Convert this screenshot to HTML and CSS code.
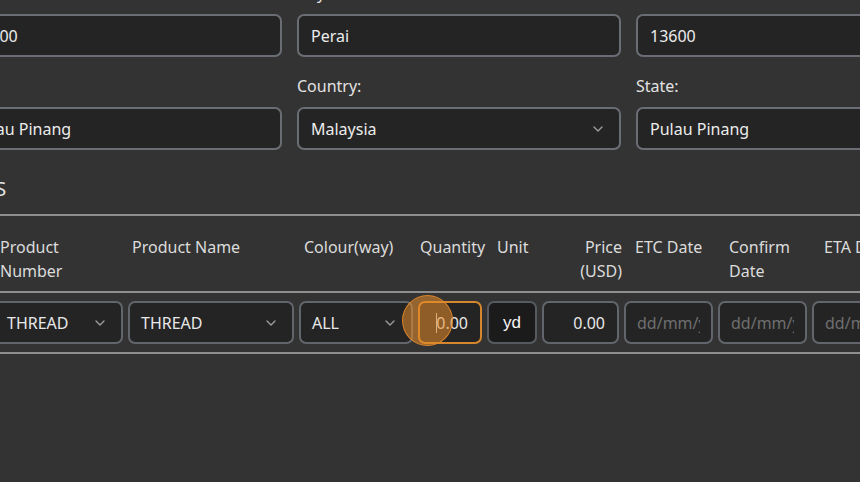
FILE: index.html
```html
<!DOCTYPE html>
<html lang="en">
<head>
<meta charset="utf-8">
<title>Order</title>
<link rel="stylesheet" href="styles.css">
</head>
<body>
<div class="page">
  <div class="form-grid">
    <div class="field"><label class="field-label">Postcode Area:</label><div class="input">13600</div></div>
    <div class="field"><label class="field-label">City:</label><div class="input">Perai</div></div>
    <div class="field"><label class="field-label">Postcode:</label><div class="input">13600</div></div>
    <div class="field"><label class="field-label">Reg:</label><div class="input">Pulau Pinang</div></div>
    <div class="field"><label class="field-label">Country:</label><div class="input select">Malaysia<svg class="chev" width="10" height="6" viewBox="0 0 10 6"><path d="M1 1 L5 5 L9 1"/></svg></div></div>
    <div class="field"><label class="field-label">State:</label><div class="input">Pulau Pinang</div></div>
  </div>

  <h2 class="section-title">ITEMS</h2>

  <div class="items">
    <div class="items-row items-head">
      <div class="th th-c1">Product Number</div>
      <div class="th th-c2">Product Name</div>
      <div class="th th-c3">Colour(way)</div>
      <div class="th th-c4">Quantity</div>
      <div class="th th-c5">Unit</div>
      <div class="th th-c6">Price (USD)</div>
      <div class="th th-c7">ETC Date</div>
      <div class="th th-c7">Confirm Date</div>
      <div class="th th-c9">ETA Date</div>
    </div>
    <div class="items-row items-body">
      <div class="cell select">THREAD<svg class="chev" width="10" height="6" viewBox="0 0 10 6"><path d="M1 1 L5 5 L9 1"/></svg></div>
      <div class="cell select">THREAD<svg class="chev" width="10" height="6" viewBox="0 0 10 6"><path d="M1 1 L5 5 L9 1"/></svg></div>
      <div class="cell select">ALL<svg class="chev" width="10" height="6" viewBox="0 0 10 6"><path d="M1 1 L5 5 L9 1"/></svg></div>
      <div class="qty-wrap">
        <div class="cell num focused"><span class="caret"></span>0.00</div>
        <span class="click-dot"></span>
      </div>
      <div class="cell unit">yd</div>
      <div class="cell num">0.00</div>
      <div class="cell date"><span class="ph">dd/mm/yyyy</span></div>
      <div class="cell date"><span class="ph">dd/mm/yyyy</span></div>
      <div class="cell date"><span class="ph">dd/mm/yyyy</span></div>
    </div>
  </div>
</div>
</body>
</html>
```
FILE: styles.css
```css
html, body {
  margin: 0;
  padding: 0;
}
body {
  background: #333333;
  color: #e4e4e4;
  font-family: "Noto Sans", "Open Sans", sans-serif;
  font-size: 16px;
  overflow: hidden;
  width: 860px;
  height: 482px;
}
.page {
  margin: -19px 0 0 -42px;
  width: 1120px;
}
.form-grid {
  display: grid;
  grid-template-columns: repeat(3, 324px);
  column-gap: 15px;
  row-gap: 17px;
}
.field-label {
  display: block;
  line-height: 24px;
  margin-bottom: 9px;
  color: #e2e2e2;
}
.input {
  box-sizing: border-box;
  height: 43px;
  border: 2px solid #6a6e74;
  border-radius: 7px;
  background: #242424;
  padding: 0 12px;
  display: flex;
  align-items: center;
  justify-content: space-between;
  color: #ececec;
  white-space: nowrap;
}
.chev {
  flex: none;
  fill: none;
  stroke: #9c9c9c;
  stroke-width: 1.4;
  stroke-linecap: round;
  stroke-linejoin: round;
}
.input.select .chev {
  margin-right: 4px;
}
.section-title {
  margin: 25px 0 11px -10px;
  font-size: 20px;
  line-height: 28px;
  font-weight: 400;
  color: #e4e4e4;
}
.items {
  margin-left: 36px;
  border-top: 2px solid #8f8f8f;
  border-bottom: 2px solid #8f8f8f;
}
.items-row {
  display: grid;
  grid-template-columns: 129px 166px 114px 64px 50px 77px 89px 89px 89px;
  column-gap: 5px;
}
.items-head {
  padding: 19px 0 8px;
  border-bottom: 2px solid #8f8f8f;
  align-items: start;
}
.th {
  line-height: 24px;
  color: #dcdcdc;
  padding-right: 6px;
}
.th-c1 { padding-left: 6px; }
.th-c2 { padding-left: 4px; }
.th-c3 { padding-left: 5px; }
.th-c4 { padding-left: 2px; padding-right: 0; white-space: nowrap; }
.th-c5 { padding-left: 10px; }
.th-c6 { text-align: right; padding-right: 0; margin-right: -3px; padding-left: 8px; }
.th-c7 { padding-left: 11px; }
.th-c9 { padding-left: 12px; white-space: nowrap; }
.items-body {
  padding: 8px 0;
}
.cell {
  box-sizing: border-box;
  height: 43px;
  border: 2px solid #62666c;
  border-radius: 7px;
  background: #242424;
  display: flex;
  align-items: center;
  white-space: nowrap;
  color: #e8e8e8;
}
.cell.select {
  justify-content: space-between;
  padding: 0 16px 0 11px;
}
.qty-wrap {
  position: relative;
}
.cell.num {
  justify-content: flex-end;
  padding: 0 12px;
}
.cell.focused {
  border-color: #d6862c;
}
.caret {
  display: inline-block;
  width: 1px;
  height: 20px;
  background: #d8d8d8;
  margin-right: -1px;
}
.click-dot {
  position: absolute;
  left: -16px;
  top: -6px;
  width: 49px;
  height: 49px;
  border-radius: 50%;
  background: rgba(232, 140, 44, 0.55);
  border: 1.5px solid rgba(232, 140, 44, 0.85);
  pointer-events: none;
}
.cell.unit {
  justify-content: center;
  background: #1b1b1b;
  border-color: #575b60;
  font-family: "Liberation Sans", Arial, sans-serif;
  font-size: 17px;
  color: #f6f6f6;
}
.cell.date {
  padding: 0 11px;
}
.ph {
  display: block;
  overflow: hidden;
  width: 100%;
  color: #6f6f6f;
}
```
